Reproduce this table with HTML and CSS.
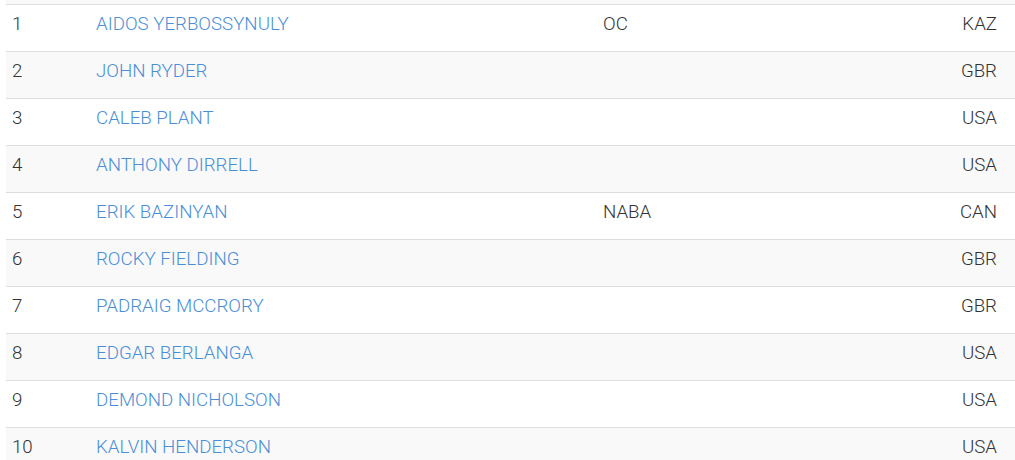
FILE: index.html
```html
<!DOCTYPE html>
<html>
<head>
<meta charset="utf-8">
<link rel="stylesheet" href="styles.css">
</head>
<body>
<table class="rank">
  <colgroup>
    <col class="c-pos"><col class="c-name"><col class="c-org"><col class="c-cty">
  </colgroup>
  <tbody>
    <tr class="stub"><td></td><td></td><td></td><td></td></tr>
    <tr><td class="pos">1</td><td class="name"><a href="#">AIDOS YERBOSSYNULY</a></td><td class="org">OC</td><td class="cty">KAZ</td></tr>
    <tr><td class="pos">2</td><td class="name"><a href="#">JOHN RYDER</a></td><td class="org"></td><td class="cty">GBR</td></tr>
    <tr><td class="pos">3</td><td class="name"><a href="#">CALEB PLANT</a></td><td class="org"></td><td class="cty">USA</td></tr>
    <tr><td class="pos">4</td><td class="name"><a href="#">ANTHONY DIRRELL</a></td><td class="org"></td><td class="cty">USA</td></tr>
    <tr><td class="pos">5</td><td class="name"><a href="#">ERIK BAZINYAN</a></td><td class="org">NABA</td><td class="cty">CAN</td></tr>
    <tr><td class="pos">6</td><td class="name"><a href="#">ROCKY FIELDING</a></td><td class="org"></td><td class="cty">GBR</td></tr>
    <tr><td class="pos">7</td><td class="name"><a href="#">PADRAIG MCCRORY</a></td><td class="org"></td><td class="cty">GBR</td></tr>
    <tr><td class="pos">8</td><td class="name"><a href="#">EDGAR BERLANGA</a></td><td class="org"></td><td class="cty">USA</td></tr>
    <tr><td class="pos">9</td><td class="name"><a href="#">DEMOND NICHOLSON</a></td><td class="org"></td><td class="cty">USA</td></tr>
    <tr><td class="pos">10</td><td class="name"><a href="#">KALVIN HENDERSON</a></td><td class="org"></td><td class="cty">USA</td></tr>
  </tbody>
</table>
</body>
</html>
```

FILE: styles.css
```css
html, body {
  margin: 0;
  padding: 0;
  background: #fff;
  overflow: hidden;
}
body {
  padding-left: 6px;
  font-family: Roboto, "Liberation Sans", sans-serif;
  font-weight: 300;
  font-size: 18.7px;
  color: #333;
}
.rank {
  border-collapse: collapse;
  table-layout: fixed;
  width: 1009px;
}
.c-pos { width: 84px; }
.c-name { width: 506px; }
.c-org { width: 300px; }
.c-cty { width: 119px; }
.rank td {
  border-top: 1px solid #ddd;
  padding: 6px 0 14px 0;
  line-height: 26px;
  white-space: nowrap;
}
.rank tr:nth-child(odd) td { background: #f9f9f9; }
.rank tr.stub td {
  border-top: 0;
  height: 4px;
  padding: 0;
  line-height: 0;
}
.pos { padding-left: 6px !important; }
.name { padding-left: 6px !important; }
.org { padding-left: 7px !important; }
.cty { padding-right: 18px !important; text-align: right; }
.name a {
  color: #4a8fd6;
  text-decoration: none;
}
```
